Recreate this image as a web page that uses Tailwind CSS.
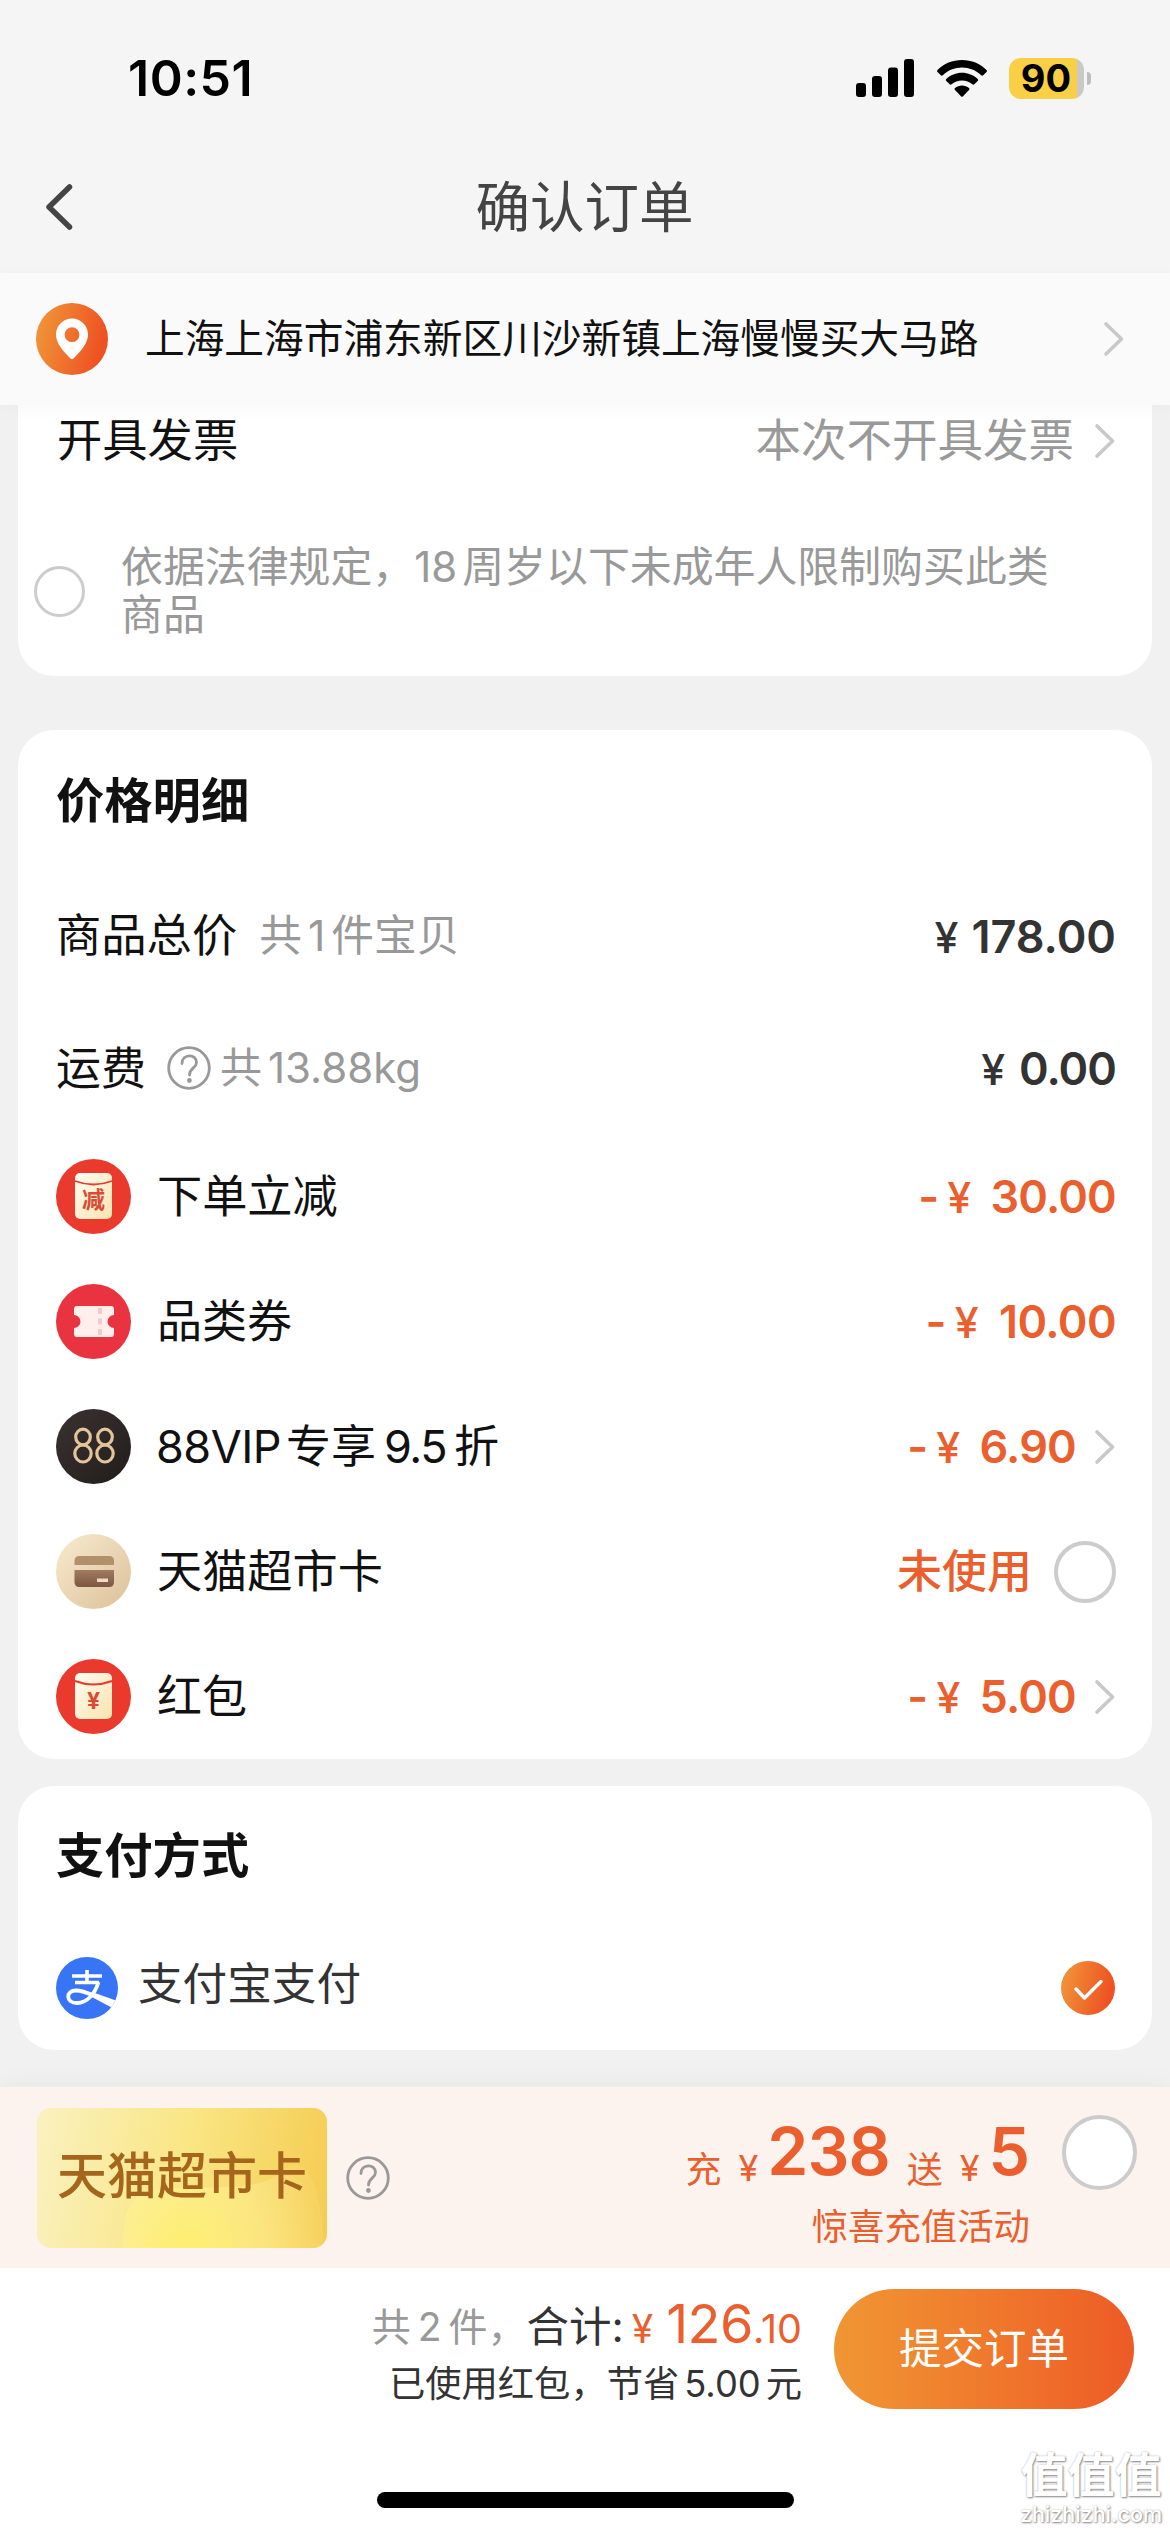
<!DOCTYPE html>
<html lang="zh-CN">
<head>
<meta charset="utf-8">
<title>确认订单</title>
<script src="https://cdn.jsdelivr.net/npm/@tailwindcss/browser@4"></script>
</head>
<body class="bg-[#f1f1f1]">
<svg class="absolute w-0 h-0" aria-hidden="true">
  <defs>
    <symbol id="chev" viewBox="0 0 22 36"><path d="M3 3 L18.500 18 L3 33" fill="none" stroke="#c8c8c8" stroke-width="3.600" stroke-linecap="round" stroke-linejoin="round"/></symbol>
    <symbol id="help" viewBox="0 0 44 44"><circle cx="22" cy="22" r="20.300" fill="none" stroke="#999" stroke-width="2.800"/><path d="M15 17.500 C15 7.500 29.500 7.500 29.500 16.500 C29.500 22 22.500 22 22.500 29" fill="none" stroke="#999" stroke-width="2.800" stroke-linecap="round"/><circle cx="22.400" cy="34.500" r="2.400" fill="#999"/></symbol>
    <linearGradient id="og" x1="0" y1="0" x2="1" y2="0.250"><stop offset="0" stop-color="#f09a3a"/><stop offset="1" stop-color="#ee5222"/></linearGradient>
    <linearGradient id="env" x1="0" y1="0" x2="1" y2="1"><stop offset="0" stop-color="#fffdf2"/><stop offset="1" stop-color="#fae3ae"/></linearGradient>
    <linearGradient id="tan" x1="0" y1="0" x2="1" y2="1"><stop offset="0" stop-color="#f8ebcf"/><stop offset="1" stop-color="#dcc09a"/></linearGradient>
    <linearGradient id="blk" x1="0" y1="0" x2="1" y2="1"><stop offset="0" stop-color="#3b3230"/><stop offset="1" stop-color="#211d1b"/></linearGradient>
    <linearGradient id="brn" x1="0" y1="0" x2="0" y2="1"><stop offset="0" stop-color="#a07c5f"/><stop offset="1" stop-color="#7d5544"/></linearGradient>
    <clipPath id="alic"><circle cx="31" cy="31" r="31"/></clipPath>
  </defs>
</svg>
<div class="w-[1170px] h-[2532px] overflow-hidden flex flex-col font-['Inter','Noto_Sans_CJK_SC',sans-serif] text-[#111] text-[45px] leading-none whitespace-nowrap">

  <!-- status bar + title -->
  <header class="h-[273px] shrink-0 bg-[#f5f5f5] flex flex-col">
    <div class="h-[141px] pt-[15px] pl-[128px] pr-[79px] flex items-center justify-between text-black">
      <span class="text-[50px] font-semibold tracking-[0.500px]">10:51</span>
      <div class="flex items-center">
        <svg class="w-[58px] h-[38px]" viewBox="0 0 58 38"><rect x="0" y="24" width="10" height="14" rx="3"/><rect x="16" y="17" width="10" height="21" rx="3"/><rect x="32" y="8.500" width="10" height="29.500" rx="3"/><rect x="48" y="0" width="10" height="38" rx="3"/></svg>
        <svg class="w-[50px] h-[37px] ml-[23px]" viewBox="0 0 50 37"><path d="M25 0 C34.500 0 43.200 3.700 49.500 9.900 C50.100 10.500 50.100 11.300 49.500 11.900 L46.200 15.200 C45.600 15.800 44.800 15.800 44.200 15.200 C39 10.400 32.300 7.600 25 7.600 C17.700 7.600 11 10.400 5.800 15.200 C5.200 15.800 4.400 15.800 3.800 15.200 L0.500 11.900 C-0.100 11.300 -0.100 10.500 0.500 9.900 C6.800 3.700 15.500 0 25 0Z"/><path d="M25 12.800 C31 12.800 36.500 15.100 40.700 18.900 C41.300 19.500 41.300 20.300 40.700 20.900 L37.300 24.200 C36.700 24.800 36 24.800 35.400 24.300 C32.600 21.900 29 20.400 25 20.400 C21 20.400 17.400 21.900 14.600 24.300 C14 24.800 13.300 24.800 12.700 24.200 L9.300 20.900 C8.700 20.300 8.700 19.500 9.300 18.900 C13.500 15.100 19 12.800 25 12.800Z"/><path d="M25 25.400 C27.700 25.400 30.100 26.400 32 28 C32.600 28.500 32.600 29.300 32 29.900 L26 36.200 C25.400 36.900 24.600 36.900 24 36.200 L18 29.900 C17.400 29.300 17.400 28.500 18 28 C19.900 26.400 22.300 25.400 25 25.400Z"/></svg>
        <div class="w-[75px] h-[41px] ml-[22px] rounded-[12px] bg-[linear-gradient(90deg,#f9cf46_68px,#c9c9c9_68px)] flex items-center justify-center pr-[1px] text-[38px] font-bold">90</div>
        <div class="w-[4px] h-[13px] ml-[3px] rounded-r-full bg-[#bdbdbd]"></div>
      </div>
    </div>
    <div class="h-[132px] flex items-center pl-[44px]">
      <svg class="w-[30px] h-[48px]" viewBox="0 0 30 48"><path d="M25.500 4 L5 24 L25.500 44" fill="none" stroke="#444" stroke-width="5.500" stroke-linecap="round" stroke-linejoin="round"/></svg>
      <h1 class="grow text-center pr-[75px] text-[54.500px] text-[#444]">确认订单</h1>
    </div>
  </header>

  <!-- address -->
  <div class="h-[132px] shrink-0 bg-[#fafafa] flex items-center pl-[36px] pr-[45px] shadow-[0_4px_20px_rgba(0,0,0,0.03)] relative z-10">
    <svg class="w-[72px] h-[72px]" viewBox="0 0 72 72"><circle cx="36" cy="36" r="36" fill="url(#og)"/><path fill="#fff" fill-rule="evenodd" d="M36 15.500 C44.800 15.500 52 22.700 52 31.500 C52 40.500 44.500 48.500 37.500 55.500 Q36 57 34.500 55.500 C27.500 48.500 20 40.500 20 31.500 C20 22.700 27.200 15.500 36 15.500Z M36 24.300 A7.400 7.400 0 1 0 36 39.100 A7.400 7.400 0 1 0 36 24.300Z"/></svg>
    <span class="ml-[37px] pt-[2px] grow text-[39.700px]">上海上海市浦东新区川沙新镇上海慢慢买大马路</span>
    <svg class="w-[22px] h-[38px]"><use href="#chev"/></svg>
  </div>

  <!-- invoice -->
  <section class="h-[271px] shrink-0 mx-[18px] bg-white rounded-b-[36px]">
    <div class="h-[70px] pt-[1px] pl-[39px] pr-[36px] flex items-center">
      <span class="grow text-[45.300px]">开具发票</span>
      <span class="text-[45.500px] text-[#999] mr-[20px]">本次不开具发票</span>
      <svg class="w-[22px] h-[36px]"><use href="#chev"/></svg>
    </div>
    <div class="pt-[68px] pl-[16px] flex items-center">
      <div class="w-[51px] h-[51px] rounded-full border-[3px] border-[#ccc]"></div>
      <p class="ml-[36px] text-[41.900px] leading-[48px] text-[#999]">依据法律规定，<span class="mr-[5px]">18</span>周岁以下未成年人限制购买此类<br>商品</p>
    </div>
  </section>

  <!-- price details -->
  <section class="h-[1029px] shrink-0 mt-[54px] mx-[18px] bg-white rounded-[36px] pl-[38px] pr-[36px] pt-[41px]">
    <h2 class="h-[60px] flex items-center text-[48.300px] font-bold">价格明细</h2>
    <div class="h-[132px] mt-[39px] flex items-center">
      <span class="text-[45.300px]">商品总价</span>
      <span class="grow ml-[22px] text-[42.700px] text-[#999]">共<span class="mx-[6px]">1</span>件宝贝</span>
      <span class="font-semibold text-[#333]"><span class="text-[43px] font-medium mr-[13px]">¥</span>178.00</span>
    </div>
    <div class="h-[132px] flex items-center">
      <span>运费</span>
      <svg class="w-[44px] h-[44px] ml-[21px]"><use href="#help"/></svg>
      <span class="grow ml-[9px] text-[42px] text-[#999]">共<span class="ml-[6px]">13.88kg</span></span>
      <span class="font-semibold text-[#333] tracking-[-1px]"><span class="text-[43px] font-medium mr-[15px]">¥</span>0.00</span>
    </div>
    <div class="h-[125px] flex items-center">
      <svg class="w-[75px] h-[75px]" viewBox="0 0 75 75"><circle cx="37.500" cy="37.500" r="37.500" fill="#ea392d"/><rect x="19" y="14" width="37" height="46" rx="5" fill="url(#env)"/><path d="M19 22 Q37.500 29 56 22" stroke="#ea392d" stroke-width="1.800" fill="none"/><text x="37.500" y="49" font-size="23" font-weight="700" text-anchor="middle" fill="#dc4a35">减</text></svg>
      <span class="grow ml-[26px] text-[45.200px]">下单立减</span>
      <span class="font-semibold text-[#ea5f2d] tracking-[-0.800px]">-<span class="text-[43px] font-medium ml-[9px] mr-[20px]">¥</span>30.00</span>
    </div>
    <div class="h-[125px] flex items-center">
      <svg class="w-[75px] h-[75px]" viewBox="0 0 75 75"><circle cx="37.500" cy="37.500" r="37.500" fill="#e93340"/><path d="M21 22 H55 Q58 22 58 25 V31 A6.500 6.500 0 0 0 58 44 V50 Q58 53 55 53 H21 Q18 53 18 50 V44 A6.500 6.500 0 0 0 18 31 V25 Q18 22 21 22Z" fill="#feefed"/><path d="M44 24 V52" stroke="#f6c9c8" stroke-width="4" stroke-dasharray="6 4.500"/></svg>
      <span class="grow ml-[26px]">品类券</span>
      <span class="font-semibold text-[#ea5f2d] tracking-[-0.600px]">-<span class="text-[43px] font-medium ml-[9px] mr-[21px]">¥</span>10.00</span>
    </div>
    <div class="h-[125px] flex items-center">
      <svg class="w-[75px] h-[75px]" viewBox="0 0 75 75"><circle cx="37.500" cy="37.500" r="37.500" fill="url(#blk)"/><g fill="none" stroke="#e3c49b" stroke-width="3.200"><ellipse cx="27" cy="28" rx="7.300" ry="7.800"/><ellipse cx="27" cy="44.500" rx="8.200" ry="8.500"/><ellipse cx="49" cy="28" rx="7.300" ry="7.800"/><ellipse cx="49" cy="44.500" rx="8.200" ry="8.500"/></g></svg>
      <span class="grow ml-[25px]"><span class="tracking-[-0.500px]">88VIP</span><span class="ml-[5px] mr-[8px]">专享</span><span class="tracking-[-1.500px]">9.5</span><span class="ml-[8px]">折</span></span>
      <span class="font-semibold text-[#ea5f2d] tracking-[-0.800px] mr-[18px]">-<span class="text-[43px] font-medium ml-[9px] mr-[20px]">¥</span>6.90</span>
      <svg class="w-[22px] h-[36px]"><use href="#chev"/></svg>
    </div>
    <div class="h-[125px] flex items-center">
      <svg class="w-[75px] h-[75px]" viewBox="0 0 75 75"><circle cx="37.500" cy="37.500" r="37.500" fill="url(#tan)"/><path d="M18.500 31 V27 Q18.500 22 23.500 22 H53 Q58 22 58 27 V31Z" fill="#b1906a"/><path d="M18.500 36 H58 V48 Q58 53 53 53 H23.500 Q18.500 53 18.500 48Z" fill="url(#brn)"/><rect x="41" y="44.500" width="11" height="3.500" fill="#ecdcc0"/></svg>
      <span class="grow ml-[26px] text-[45.200px]">天猫超市卡</span>
      <span class="font-medium text-[#ea5f2d] mr-[22px]">未使用</span>
      <div class="w-[62px] h-[62px] rounded-full border-[4px] border-[#ccc]"></div>
    </div>
    <div class="h-[125px] flex items-center">
      <svg class="w-[75px] h-[75px]" viewBox="0 0 75 75"><circle cx="37.500" cy="37.500" r="37.500" fill="#ea392d"/><rect x="19" y="14" width="37" height="46" rx="5" fill="url(#env)"/><path d="M19 22 Q37.500 29 56 22" stroke="#ea392d" stroke-width="2" fill="none"/><text x="37.500" y="49.500" font-size="23" font-weight="700" text-anchor="middle" fill="#dc4a35">¥</text></svg>
      <span class="grow ml-[26px]">红包</span>
      <span class="font-semibold text-[#ea5f2d] tracking-[-0.800px] mr-[18px]">-<span class="text-[43px] font-medium ml-[9px] mr-[20px]">¥</span>5.00</span>
      <svg class="w-[22px] h-[36px]"><use href="#chev"/></svg>
    </div>
  </section>

  <!-- payment method -->
  <section class="h-[264px] shrink-0 mt-[27px] mx-[18px] bg-white rounded-[36px] pl-[38px] pr-[37px] pt-[40px]">
    <h2 class="h-[60px] flex items-center text-[48.300px] font-bold">支付方式</h2>
    <div class="h-[80px] mt-[62px] flex items-center">
      <svg class="w-[62px] h-[62px]" viewBox="0 0 62 62"><g clip-path="url(#alic)"><rect width="62" height="62" fill="#3875f6"/><path d="M36 35 L64 45 V55 L34 39Z" fill="#fff"/><g fill="none" stroke="#fff"><path d="M31 13 V26 M16 19 H46 M19 25.500 H43" stroke-width="3.600"/><path d="M42.500 25 C39 37 31 46 21 46 C9.500 46 9.500 33.500 20 33.500 C27 33.500 33 36.500 40 39.500" stroke-width="3.800"/></g></g></svg>
      <span class="grow ml-[20px] text-[44.600px] text-[#333] -translate-y-[4px]">支付宝支付</span>
      <svg class="w-[54px] h-[54px]" viewBox="0 0 54 54"><circle cx="27" cy="27" r="27" fill="url(#og)"/><path d="M15 28 L23.500 37 L40 20.500" fill="none" stroke="#fff" stroke-width="3.400" stroke-linecap="round" stroke-linejoin="round"/></svg>
    </div>
  </section>

  <!-- top-up promotion -->
  <div class="h-[181px] shrink-0 mt-[37px] pl-[37px] pr-[33px] bg-[#fcf3ef] shadow-[0_-4px_24px_rgba(0,0,0,0.04)] flex items-center">
    <div class="relative w-[290px] h-[140px] rounded-[14px] overflow-hidden bg-[linear-gradient(100deg,#faf1c0,#f9e684_50%,#f5cb50)] flex items-center justify-center">
      <svg class="absolute inset-0 w-full h-full" viewBox="0 0 290 140"><defs><radialGradient id="glow" gradientUnits="userSpaceOnUse" cx="150" cy="145" r="135"><stop offset="0" stop-color="#fff06a" stop-opacity="0.900"/><stop offset="0.600" stop-color="#fff294" stop-opacity="0.500"/><stop offset="1" stop-color="#fff0a0" stop-opacity="0.150"/></radialGradient></defs><path d="M86 140 Q84 92 110 84 C150 74 220 88 244 64 C262 46 284 60 287 140Z" fill="url(#glow)"/></svg>
      <span class="relative pb-[3px] text-[50px] font-medium text-[#a5651c]">天猫超市卡</span>
    </div>
    <svg class="w-[44px] h-[44px] ml-[19px]"><use href="#help"/></svg>
    <div class="grow mr-[32px] pt-[16px] flex flex-col items-end text-[36px] text-[#ea5f2d]">
      <div class="flex items-baseline h-[83px]">
        <span>充</span><span class="ml-[17px] mr-[9px] -translate-y-[2px]">¥</span><span class="text-[66px] font-semibold tracking-[-1px] -translate-y-[8px]">238</span><span class="ml-[17px]">送</span><span class="ml-[17px] mr-[9px] -translate-y-[2px]">¥</span><span class="text-[66px] font-semibold -translate-y-[8px]">5</span>
      </div>
      <div class="text-[36.400px]">惊喜充值活动</div>
    </div>
    <div class="w-[75px] h-[75px] mb-[50px] rounded-full bg-white border-[4px] border-[#ccc]"></div>
  </div>

  <!-- submit bar -->
  <footer class="relative h-[264px] shrink-0 bg-white text-[#333]">
    <div class="flex justify-end pt-[21px] pr-[36px]">
      <div class="flex flex-col items-end mr-[32px] text-[36px]">
        <div class="flex items-baseline h-[67px] pt-[8px] text-[39px]">
          <span class="text-[#999] -translate-y-[2px]">共<span class="mx-[7px]">2</span>件，</span><span class="text-[42.500px] -translate-y-[1px]">合计:</span><span class="ml-[8px] text-[39px] text-[#ea5f2d]">¥</span><span class="ml-[13px] text-[54px] tracking-[-0.500px] text-[#ea5f2d]">126</span><span class="text-[39.500px] text-[#ea5f2d]">.10</span>
        </div>
        <div class="pt-[10px] text-[36.300px]">已使用红包，节省<span class="mx-[5px]">5.00</span>元</div>
      </div>
      <button class="w-[300px] h-[120px] rounded-full bg-linear-to-r from-[#f09633] to-[#ed5a26] text-white text-[42.500px]">提交订单</button>
    </div>
    <div class="absolute left-[377px] top-[224px] w-[417px] h-[16px] rounded-full bg-black"></div>
    <div class="absolute right-[8px] top-[183px] flex flex-col items-center text-white [text-shadow:1px_1px_2px_#888,0_0_2px_#bbb]">
      <span class="text-[47px] font-bold">值值值</span>
      <span class="text-[21.500px] font-medium mt-[6px]">zhizhizhi.com</span>
    </div>
  </footer>
</div>
</body>
</html>
